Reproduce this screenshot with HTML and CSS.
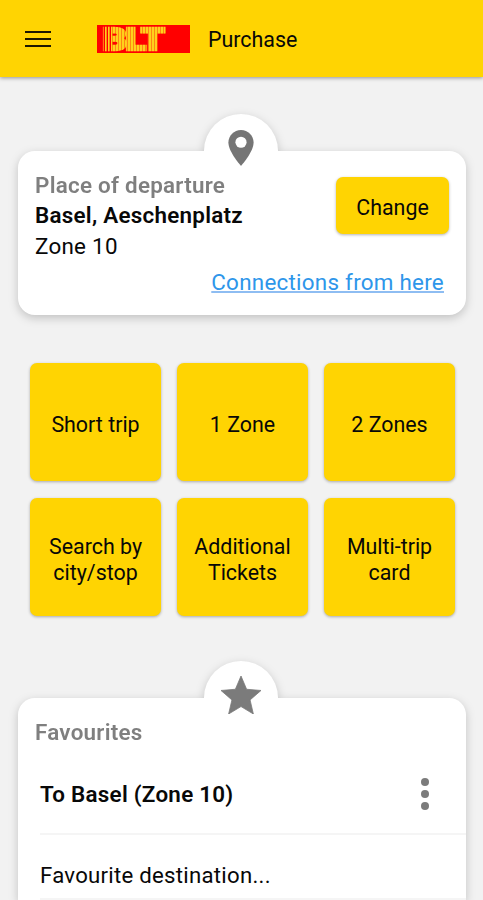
FILE: index.html
```html
<!DOCTYPE html>
<html lang="en">

<head>
  <meta charset="UTF-8" />
  <meta name="viewport" content="width=device-width, initial-scale=1.0" />
  <title>BLT - Purchase</title>
  <link rel="stylesheet" href="styles.css">
</head>

<body>
  <header class="topbar">
    <button class="menu-button" aria-label="Menu">
      <span class="menu-line"></span>
      <span class="menu-line"></span>
      <span class="menu-line"></span>
    </button>
    <svg class="logo" viewBox="0 0 93 28" role="img" aria-label="BLT">
      <defs>
        <pattern id="stripes" width="3" height="28" patternUnits="userSpaceOnUse">
          <rect width="1" height="28" fill="#ff0000" opacity="0.36" />
        </pattern>
      </defs>
      <rect width="93" height="28" fill="#ff0000" />
      <text class="logo-text" x="5.5" y="25" textLength="61" lengthAdjust="spacingAndGlyphs">BLT</text>
      <rect x="3" width="66" height="28" fill="url(#stripes)" />
      <path d="M7.5 1v26M10.5 1v26M13.5 1v26" stroke="#ff0000" stroke-width="1" />
    </svg>
    <h1 class="title">Purchase</h1>
  </header>

  <main class="content">
    <section class="card departure">
      <div class="card-tab">
        <svg class="pin-icon" viewBox="5 2 14 20">
          <path d="M12 2C8.13 2 5 5.13 5 9c0 5.25 7 13 7 13s7-7.75 7-13c0-3.87-3.13-7-7-7z" fill="#757575" />
          <circle cx="12" cy="8.8" r="3.1" fill="#fff" />
        </svg>
      </div>
      <div class="departure-row">
        <div class="departure-info">
          <h2 class="card-title">Place of departure</h2>
          <div class="stop-name">Basel, Aeschenplatz</div>
          <div class="zone">Zone 10</div>
        </div>
        <button class="button change-button">Change</button>
      </div>
      <a class="connections" href="#">Connections from here</a>
    </section>

    <div class="tickets">
      <button class="button">Short trip</button>
      <button class="button">1 Zone</button>
      <button class="button">2 Zones</button>
      <button class="button">Search by<br>city/stop</button>
      <button class="button">Additional<br>Tickets</button>
      <button class="button">Multi-trip<br>card</button>
    </div>

    <section class="card favourites">
      <div class="card-tab">
        <svg class="star-icon" viewBox="2 2 20 19">
          <path d="M12 17.27L18.18 21l-1.64-7.03L22 9.24l-7.19-.61L12 2 9.19 8.63 2 9.24l5.46 4.73L5.82 21z" fill="#7b7b7b" stroke="#7b7b7b" stroke-width="0.4" stroke-linejoin="round" />
        </svg>
      </div>
      <h2 class="card-title">Favourites</h2>
      <ul class="favourite-list">
        <li class="favourite">
          <span class="favourite-name">To Basel (Zone 10)</span>
          <button class="more-button" aria-label="More">
            <span class="dot"></span>
            <span class="dot"></span>
            <span class="dot"></span>
          </button>
        </li>
        <li class="favourite">Favourite destination...</li>
      </ul>
    </section>
  </main>
</body>

</html>
```
FILE: styles.css
```css
* {
  box-sizing: border-box;
}

body {
  margin: 0;
  height: 900px;
  overflow: hidden;
  background-color: #f2f2f2;
  color: #080808;
  font-family: Roboto, 'Liberation Sans', sans-serif;
  font-size: 21.5px;
}

button {
  border: none;
  padding: 0;
  background: none;
  color: inherit;
  font: inherit;
  cursor: pointer;
}

.topbar {
  display: flex;
  align-items: center;
  height: 77px;
  padding-left: 25px;
  background-color: #ffd402;
  box-shadow: 0 1px 4px rgba(0, 0, 0, 0.4);
}

.menu-button {
  display: flex;
  flex-direction: column;
  gap: 5px;
  width: 26px;
}

.menu-line {
  height: 2px;
  background-color: #1c1800;
}

.logo {
  width: 93px;
  height: 28px;
  margin-left: 46px;
  overflow: visible;
}

.logo-text {
  fill: #ffd21c;
  stroke: #ffd21c;
  stroke-width: 2.4;
  font-family: Roboto, sans-serif;
  font-size: 31px;
  font-weight: 900;
  letter-spacing: -1px;
}

.title {
  margin: 2px 0 0 18px;
  font-size: 21.4px;
  font-weight: 400;
}

.content {
  padding: 74px 17px 0 18px;
}

.card {
  position: relative;
  border-radius: 17px;
  background-color: #fff;
  font-size: 22.4px;
  letter-spacing: 0.26px;
  filter: drop-shadow(0 3px 5px rgba(0, 0, 0, 0.2));
}

/* round tab sticking out of the card's top edge */
.card-tab {
  position: absolute;
  top: -37px;
  left: 186px;
  display: flex;
  justify-content: center;
  width: 74px;
  height: 74px;
  border-radius: 50%;
  background-color: #fff;
}

.pin-icon {
  width: 26px;
  height: 36px;
  margin-top: 16px;
}

.star-icon {
  width: 40px;
  height: 38px;
  margin-top: 15px;
}

.card-title {
  position: relative;
  margin: 0;
  color: #7f7f7f;
  font-size: inherit;
  font-weight: 600;
  line-height: 30px;
}

.departure {
  display: flex;
  flex-direction: column;
  height: 164px;
  padding: 19px 17px 0 17px;
}

.departure-row {
  display: flex;
  justify-content: space-between;
  line-height: 31px;
}

.stop-name,
.favourite-name {
  font-weight: 600;
}

.connections {
  align-self: flex-end;
  margin: 6px 5px 0 0;
  color: #2e96ea;
  line-height: 28px;
  text-decoration-color: #8ebdf2;
  text-decoration-thickness: 2px;
  text-decoration-skip-ink: none;
  text-underline-offset: 1px;
}

.button {
  border-radius: 7px;
  background-color: #ffd402;
  box-shadow: 0 1px 3px rgba(0, 0, 0, 0.3);
  font-size: 21.4px;
  letter-spacing: 0;
  line-height: 26px;
}

.change-button {
  width: 113px;
  height: 57px;
  margin: 7px 0 0;
  padding-top: 5px;
}

.tickets {
  display: grid;
  grid-template-columns: repeat(3, 131px);
  grid-auto-rows: 118px;
  gap: 17px 16px;
  margin: 48px 0 0 12px;
}

.tickets .button {
  padding-top: 6px;
}

.favourites {
  height: 202px;
  margin-top: 82px;
  padding: 19px 0 0 17px;
  border-radius: 17px 17px 0 0;
}

.favourite-list {
  margin: 0;
  padding: 7px 0 0 5px;
  list-style: none;
}

.favourite {
  display: flex;
  align-items: center;
  justify-content: space-between;
  height: 81px;
  padding-right: 37px;
  border-bottom: 2px solid #f5f5f5;
}

.favourite + .favourite {
  height: 65px;
  padding-top: 16px;
  font-size: 22.2px;
}

.more-button {
  display: flex;
  flex-direction: column;
  gap: 4px;
}

.dot {
  width: 8px;
  height: 8px;
  border-radius: 50%;
  background-color: #7b7b7b;
}
```
